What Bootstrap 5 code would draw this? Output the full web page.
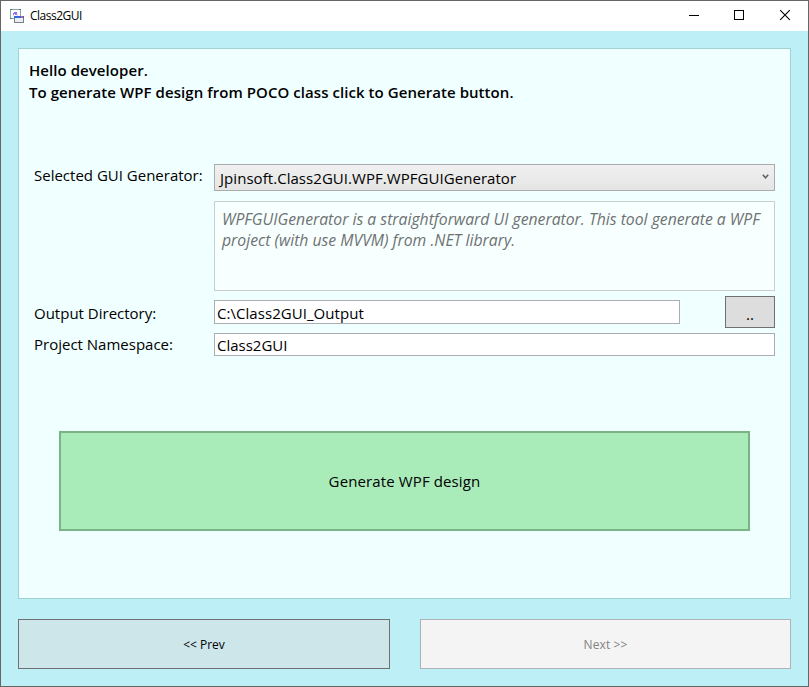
<!DOCTYPE html>
<html lang="en">
<head>
<meta charset="utf-8">
<meta name="viewport" content="width=device-width, initial-scale=1">
<title>Class2GUI</title>
<link href="https://cdn.jsdelivr.net/npm/bootstrap@5.3.0/dist/css/bootstrap.min.css" rel="stylesheet">
<style>
  body { font-family: "Open Sans", "Noto Sans", sans-serif; font-size: 15px; line-height: 21px; color: #000; }
  .app-window { width: 809px; height: 687px; border: 1px solid #666; background: #bdf0f6; }
  .title-bar { height: 30px; background: #fff; font-size: 12px; padding-left: 9px; }
  .title-text { letter-spacing: -.5px; margin-left: 5px; padding-bottom: 1px; }
  .caption-btn { width: 46px; height: 30px; }
  .app-body { padding: 17px 17px 17px; }
  .wizard-panel { height: 551px; border: 1px solid #a0d2d2; background: #f0ffff; padding: 10px 15px 0; }
  .intro { font-weight: 600; line-height: 22px; margin-left: -5px; height: 105px; letter-spacing: .06px; }
  .field-label { width: 180px; flex: none; padding-top: 1px; }
  .gen-select { height: 27px; border: 1px solid #acacac; background: linear-gradient(#f0f0f0, #e5e5e5); padding: 3px 5px 0; text-align: left; color: #000; letter-spacing: .05px; }
  .description { height: 90px; margin: 10px 0 0 180px; border: 1px solid #c7cfcf; background: #f8ffff; color: #6d7272; font-style: italic; font-size: 15.75px; padding: 7px; white-space: nowrap; }
  .text-field, .text-field:focus { border: 1px solid #abadb3; background: #fff; padding: 2px 2px 0; color: #000; font-size: 15px; line-height: 20px; box-shadow: none; }
  .out-row { margin-top: 5px; }
  .out-row .field-label { padding-top: 3px; }
  .ns-row { margin-top: 5px; height: 23px; }
  .ns-row .field-label { padding: 0 0 1px; }
  .dir-field { width: 466px; height: 24px; letter-spacing: .05px; }
  .ns-field, .ns-field:focus { height: 23px; padding: 0 2px; }
  .browse-btn { width: 50px; height: 32px; border: 1px solid #707070; background: #ddd; padding: 4px 0 0; color: #000; font-size: 15px; line-height: 21px; }
  .generate-btn, .generate-btn:hover { height: 100px; margin: 75px 25px 0; border: 2px solid #7bb384; background: #aaebba; color: #000; font-size: 15px; letter-spacing: .12px; }
  .wizard-nav { margin-top: 20px; gap: 30px; }
  .nav-btn { height: 50px; font-size: 12px; line-height: 16px; padding: 2px 0 0; }
  .prev-btn { width: 372px; border: 1px solid #707070; background: #cce6ea; color: #000; }
  .next-btn, .next-btn:disabled { width: 371px; border: 1px solid #adb2b5; background: #f4f4f4; color: #838383; opacity: 1; letter-spacing: .12px; }
</style>
<script src="https://cdn.jsdelivr.net/npm/bootstrap@5.3.0/dist/js/bootstrap.bundle.min.js"></script>
</head>
<body class="overflow-hidden">
<div class="app-window d-flex flex-column">
  <header class="title-bar d-flex align-items-center">
    <svg width="15" height="15" viewBox="0 0 15 15" shape-rendering="crispEdges" aria-hidden="true">
      <rect x=".5" y=".5" width="10" height="9" fill="#fdfdff" stroke="#86a5a8"/>
      <path d="M0 0h2v1H0zM9 0h2v1H9zM0 9h2v1H0z" fill="#557b80"/>
      <path d="M3 4h1v3H3zM4 3h2v2H4zM5 5h2v1H5zM6 3h1v3H6z" fill="#9b6bf0"/>
      <path d="M3 6h1v1H3zM7 6h1v1H7z" fill="#d7c5fa"/>
      <rect x="4.500" y="7.500" width="9" height="6" fill="#e9edf4" stroke="#7c7c84"/>
      <rect x="4" y="7" width="10" height="2" fill="#2f68e0"/>
      <rect x="11" y="7" width="2" height="2" fill="#d0607a"/>
    </svg>
    <span class="title-text">Class2GUI</span>
    <div class="d-flex ms-auto">
      <div class="caption-btn"><svg width="46" height="30" shape-rendering="crispEdges"><path d="M19 14.500h10" stroke="#000"/></svg></div>
      <div class="caption-btn"><svg width="46" height="30" shape-rendering="crispEdges"><path d="M18.500 9.500h9v9h-9z" fill="none" stroke="#000"/></svg></div>
      <div class="caption-btn"><svg width="46" height="30"><path d="M18.200 9.200l9.600 9.600M27.800 9.200l-9.600 9.600" stroke="#000" stroke-width="1.100"/></svg></div>
    </div>
  </header>
  <main class="app-body">
    <section class="wizard-panel">
      <div class="intro">Hello developer.<br>To generate WPF design from POCO class click to Generate button.</div>
      <div class="d-flex">
        <div class="field-label">Selected GUI Generator:</div>
        <button type="button" class="gen-select d-flex flex-grow-1 justify-content-between">
          <span>Jpinsoft.Class2GUI.WPF.WPFGUIGenerator</span>
          <svg width="7" height="7" class="mt-1" viewBox="0 0 7 7"><path d="M.8 2.800l2.700 3 2.700-3" fill="none" stroke="#606060" stroke-width="1.500"/></svg>
        </button>
      </div>
      <div class="description">WPFGUIGenerator is a straightforward UI generator. This tool generate a WPF<br>project (with use MVVM) from .NET library.</div>
      <div class="d-flex align-items-center out-row">
        <label class="field-label" for="dir">Output Directory:</label>
        <input id="dir" class="form-control rounded-0 text-field dir-field" value="C:\Class2GUI_Output">
        <button type="button" class="btn rounded-0 browse-btn ms-auto">..</button>
      </div>
      <div class="d-flex align-items-center ns-row">
        <label class="field-label" for="ns">Project Namespace:</label>
        <input id="ns" class="form-control rounded-0 text-field ns-field" value="Class2GUI">
      </div>
      <div class="d-grid"><button type="button" class="btn rounded-0 generate-btn">Generate WPF design</button></div>
    </section>
    <nav class="wizard-nav d-flex" aria-label="Wizard">
      <button type="button" class="btn rounded-0 nav-btn prev-btn">&lt;&lt; Prev</button>
      <button type="button" class="btn rounded-0 nav-btn next-btn" disabled>Next &gt;&gt;</button>
    </nav>
  </main>
</div>
</body>
</html>
